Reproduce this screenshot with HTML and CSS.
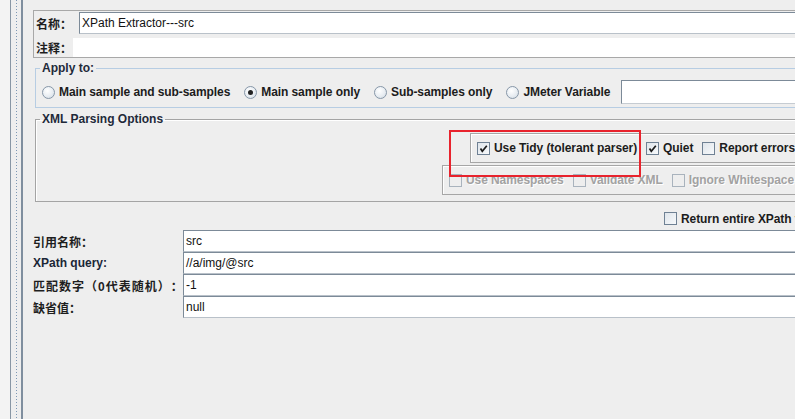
FILE: index.html
```html
<!DOCTYPE html>
<html lang="zh">
<head>
<meta charset="utf-8">
<title>XPath Extractor</title>
<link rel="stylesheet" href="styles.css">
</head>
<body>
<div class="gutter">
  <div class="gutter-edge"></div>
  <div class="gutter-dots"></div>
  <div class="gutter-bar"></div>
</div>
<div class="panel">
  <div class="namebox">
    <div class="name-row">
      <span class="lbl name-lbl">名称<span class="colon">：</span></span>
      <div class="field name-field">XPath Extractor---src</div>
    </div>
    <div class="comment-row">
      <span class="lbl comment-lbl">注释<span class="colon">：</span></span>
      <div class="comment-field"></div>
    </div>
  </div>

  <fieldset class="group apply">
    <legend>Apply to:</legend>
    <div class="radio-row">
      <span class="radio"></span><span class="opt">Main sample and sub-samples</span>
      <span class="radio on"></span><span class="opt">Main sample only</span>
      <span class="radio"></span><span class="opt">Sub-samples only</span>
      <span class="radio"></span><span class="opt">JMeter Variable</span>
      <div class="field var-field"></div>
    </div>
  </fieldset>

  <fieldset class="group xml">
    <legend>XML Parsing Options</legend>
    <div class="tidy-wrap">
      <div class="etched tidy-box">
        <span class="cb checked"><svg viewBox="0 0 11 11" width="11" height="11"><path d="M2.5 5.5 L4.3 8.3 L8.8 2.8" fill="none" stroke="#1b1b1b" stroke-width="1.7"/></svg></span><span class="opt">Use Tidy (tolerant parser)</span>
        <span class="cb checked"><svg viewBox="0 0 11 11" width="11" height="11"><path d="M2.5 5.5 L4.3 8.3 L8.8 2.8" fill="none" stroke="#1b1b1b" stroke-width="1.7"/></svg></span><span class="opt">Quiet</span>
        <span class="cb"></span><span class="opt">Report errors</span>
      </div>
      <div class="highlight"></div>
    </div>
    <div class="etched ns-box">
      <span class="cb disabled"></span><span class="opt dim">Use Namespaces</span>
      <span class="cb disabled"></span><span class="opt dim">Validate XML</span>
      <span class="cb disabled"></span><span class="opt dim">Ignore Whitespace</span>
    </div>
  </fieldset>

  <div class="return-row">
    <span class="cb"></span><span class="opt">Return entire XPath fragment instead of text content?</span>
  </div>

  <div class="form-grid">
    <span class="lbl">引用名称<span class="colon">：</span></span>
    <div class="field">src</div>
    <span class="lbl query">XPath query:</span>
    <div class="field">//a/img/@src</div>
    <span class="lbl wide">匹配数字（0代表随机）<span class="colon">：</span></span>
    <div class="field">-1</div>
    <span class="lbl">缺省值<span class="colon">：</span></span>
    <div class="field">null</div>
  </div>
</div>
</body>
</html>
```

FILE: styles.css
```css
html, body {
  margin: 0;
  padding: 0;
}
body {
  width: 795px;
  height: 419px;
  overflow: hidden;
  display: flex;
  background: #eeeeee;
  font-family: "Liberation Sans", "Noto Sans CJK SC", sans-serif;
  font-size: 12px;
  color: #1c1c1c;
  text-spacing-trim: space-all;
}

.gutter {
  display: flex;
  flex: none;
  height: 419px;
}
.gutter-edge {
  width: 10px;
  background: #f3f3f3;
  border-right: 1px solid #8896a4;
}
.gutter-dots {
  width: 10px;
  background-color: #eeeeee;
  background-image: linear-gradient(to bottom, #7e98b4 1px, transparent 1px);
  background-size: 1px 3px;
  background-position: 5px 0;
  background-repeat: repeat-y;
}
.gutter-bar {
  width: 2px;
  background: #7f8e9e;
}

.panel {
  flex: none;
  width: 830px;
  padding: 10px 0 0 10px;
  box-sizing: border-box;
}

.lbl {
  font-weight: bold;
  color: #1e1e1e;
  white-space: nowrap;
}
.colon {
  font-family: "Noto Sans CJK TC", "Noto Sans CJK SC", sans-serif;
}
.lbl.wide {
  letter-spacing: 1px;
}

.field {
  background: #fff;
  border: 1px solid #7c8a98;
  border-right: none;
  border-bottom-color: #b9c1c9;
  box-sizing: border-box;
  padding-left: 2px;
  line-height: 20px;
  color: #111;
  white-space: nowrap;
}

/* name box */
.namebox {
  border: 1px solid #a8a8a8;
  border-right: none;
  padding-left: 2px;
  height: 48px;
  box-sizing: border-box;
}
.name-row {
  display: flex;
  align-items: center;
  margin-top: 1px;
  height: 22px;
}
.name-lbl {
  width: 43px;
  flex: none;
}
.name-field {
  flex: 1;
  height: 22px;
  line-height: 20px;
}
.comment-row {
  display: flex;
  align-items: center;
  margin-top: 4px;
  height: 19px;
}
.comment-lbl {
  width: 37px;
  flex: none;
}
.comment-field {
  flex: 1;
  height: 19px;
  background: #fff;
}

/* titled groups */
.group {
  margin: 3px 0 0 2px;
  padding: 0;
  min-width: 0;
  border-right: none;
}
.group legend {
  padding: 0 2px;
  margin-left: 4px;
  font-weight: bold;
  color: #1f2a3a;
  line-height: 14px;
}
.apply {
  border: 1px solid #b7cde3;
  border-right: none;
  padding: 5px 0 3px 0;
}
.radio-row {
  display: flex;
  align-items: center;
  height: 24px;
  padding-left: 6px;
}
.opt {
  font-weight: bold;
  white-space: nowrap;
  color: #1c1c1c;
  letter-spacing: -0.08px;
}
.radio-row .opt {
  margin-left: 4px;
  margin-right: 14px;
}
.radio {
  width: 11px;
  height: 11px;
  border-radius: 50%;
  border: 1px solid #8797a8;
  background: radial-gradient(circle at 40% 35%, #ffffff 0%, #e8edf2 55%, #cfd8e0 100%);
  flex: none;
  position: relative;
}
.radio.on::after {
  content: "";
  position: absolute;
  left: 3px;
  top: 3px;
  width: 5px;
  height: 5px;
  border-radius: 50%;
  background: #222;
}
.var-field {
  margin-left: -3px;
  width: 200px;
  height: 24px;
  border-bottom-color: #c6ccd2;
}

.xml {
  margin-top: 4px;
  border: 1px solid #a4a4a4;
  border-right: none;
  padding: 7px 0 6px 0;
  box-shadow: inset 1px 1px 0 #ffffff;
}
.etched {
  display: flex;
  align-items: center;
  height: 30px;
  box-sizing: border-box;
  border: 1px solid #a6a6a6;
  border-right: none;
  box-shadow: inset 1px 1px 0 #ffffff;
}
.etched .opt {
  margin-left: 4px;
  margin-right: 9px;
}
.tidy-wrap {
  position: relative;
  margin-left: 434px;
}
.tidy-box {
  padding-left: 6px;
}
.highlight {
  position: absolute;
  left: -21px;
  top: -3px;
  width: 192px;
  height: 47px;
  box-sizing: border-box;
  border: 2px solid #e8232d;
}
.ns-box {
  margin: 2px 0 0 406px;
  padding-left: 6px;
}

.cb {
  width: 13px;
  height: 13px;
  box-sizing: border-box;
  border: 1px solid #6f8194;
  background: linear-gradient(135deg, #dfe5eb 0%, #f7f9fb 100%);
  flex: none;
  display: flex;
  align-items: center;
  justify-content: center;
}
.cb.disabled {
  border-color: #a9b3bd;
  background: #eeeeee;
}
.opt.dim {
  color: #a2a2a2;
  text-shadow: 1px 1px 0 #ffffff;
}

.return-row {
  display: flex;
  align-items: center;
  height: 17px;
  margin: 8px 0 0 631px;
}
.return-row .opt {
  margin-left: 4px;
}

.form-grid {
  display: grid;
  grid-template-columns: 150px 1fr;
  grid-auto-rows: 22px;
  margin-top: 3px;
  align-items: center;
}
.form-grid .field {
  height: 22px;
}
.form-grid .lbl.query {
  color: #1b2636;
}
```
